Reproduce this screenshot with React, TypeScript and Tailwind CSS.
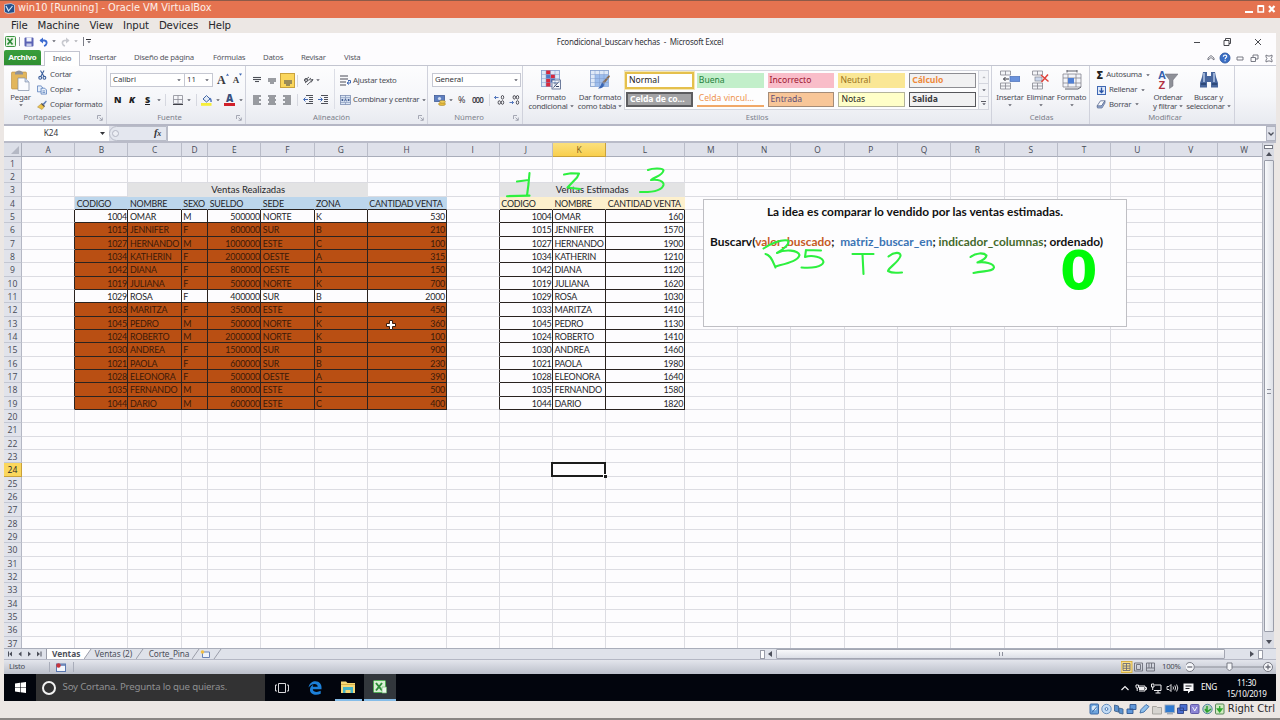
import type { ReactNode } from "react";
import { clsx } from "clsx";

const COLS = "ABCDEFGHIJKLMNOPQRSTUVW".split("");

const GRID =
  "grid grid-cols-[17.9px_53.3px_53.3px_53.3px_26.4px_53.2px_53.2px_53.3px_78.7px_53.3px_53.2px_53.2px_78.4px_53.33px_53.33px_53.33px_53.33px_53.33px_53.33px_53.33px_53.33px_53.33px_53.33px_53.33px]";

const SALES: string[][] = [
  ["1004", "OMAR", "M", "500000", "NORTE", "K", "530"],
  ["1015", "JENNIFER", "F", "800000", "SUR", "B", "210"],
  ["1027", "HERNANDO", "M", "1000000", "ESTE", "C", "100"],
  ["1034", "KATHERIN", "F", "2000000", "OESTE", "A", "315"],
  ["1042", "DIANA", "F", "800000", "OESTE", "A", "150"],
  ["1019", "JULIANA", "F", "500000", "NORTE", "K", "700"],
  ["1029", "ROSA", "F", "400000", "SUR", "B", "2000"],
  ["1033", "MARITZA", "F", "350000", "ESTE", "C", "450"],
  ["1045", "PEDRO", "M", "500000", "NORTE", "K", "360"],
  ["1024", "ROBERTO", "M", "2000000", "NORTE", "K", "100"],
  ["1030", "ANDREA", "F", "1500000", "SUR", "B", "900"],
  ["1021", "PAOLA", "F", "600000", "SUR", "B", "230"],
  ["1028", "ELEONORA", "F", "500000", "OESTE", "A", "390"],
  ["1035", "FERNANDO", "M", "800000", "ESTE", "C", "500"],
  ["1044", "DARIO", "M", "600000", "ESTE", "C", "400"],
];

const ESTIMATES = [
  "160", "1570", "1900", "1210", "1120", "1620", "1030", "1410",
  "1130", "1410", "1460", "1980", "1640", "1580", "1820",
];

const SALES_HEAD = ["CODIGO", "NOMBRE", "SEXO", "SUELDO", "SEDE", "ZONA", "CANTIDAD VENTA"];
const EST_HEAD = ["CODIGO", "NOMBRE", "CANTIDAD VENTA"];

const isData = (row: number, col: number) =>
  row >= 5 && row <= 19 && ((col >= 1 && col <= 7) || (col >= 9 && col <= 11));

function cellText(row: number, col: number) {
  if (row === 4) {
    if (col >= 1 && col <= 7) return SALES_HEAD[col - 1];
    if (col >= 9 && col <= 11) return EST_HEAD[col - 9];
  }
  if (!isData(row, col)) return "";
  const sale = SALES[row - 5];
  if (col <= 7) return sale[col - 1];
  if (col === 11) return ESTIMATES[row - 5];
  return sale[col - 9];
}

function Caret({ className }: { className?: string }) {
  return (
    <svg viewBox="0 0 5 3" className={clsx("h-[2.5px] w-[4px] shrink-0", className)}>
      <path d="M0.3 0.3h4.4L2.5 2.8z" fill="#5f616b" />
    </svg>
  );
}

function Cell({ row, col }: { row: number; col: number }) {
  const text = cellText(row, col);
  const data = isData(row, col);
  const numeric = data && [1, 4, 7, 9, 11].includes(col);
  const sold = data && col <= 7 && row !== 5 && row !== 11;
  const blackRight = data || isData(row, col + 1);
  const blackBottom = data || isData(row + 1, col);
  const head = row === 4 && text !== "";
  return (
    <div
      className={clsx(
        "overflow-hidden whitespace-nowrap border-r border-b pr-[0.5px] pl-[1.5px] leading-[13.5px]",
        numeric ? "text-right" : "text-left",
        blackRight ? "border-r-[#2a2320]" : head ? "border-r-transparent" : "border-r-[#dcdce2]",
        blackBottom ? "border-b-[#2a2320]" : "border-b-[#dcdce2]",
        sold && "bg-[#b94f13] text-[#3c1a08]",
        head && (col <= 7 ? "bg-[#bcd6ec]" : "bg-[#fdf0cd]"),
      )}
    >
      {text}
    </div>
  );
}

function MergedTitle({ text, className }: { text: string; className: string }) {
  return (
    <div className={clsx("bg-[#e3e3e4] text-center text-[9.5px] leading-[14.5px] tracking-normal", className)}>
      {text}
    </div>
  );
}

function Row({ row }: { row: number }) {
  const cells: ReactNode[] = [];
  for (let col = 0; col < COLS.length; col++) {
    if (row === 3 && col === 2) {
      cells.push(<MergedTitle key="sold" text="Ventas Realizadas" className="col-span-5" />);
      col = 6;
    } else if (row === 3 && col === 9) {
      cells.push(<MergedTitle key="est" text="Ventas Estimadas" className="col-span-3" />);
      col = 11;
    } else {
      cells.push(<Cell key={col} row={row} col={col} />);
    }
  }
  return (
    <div className={clsx(GRID, "h-[13.333px] grid-rows-[13.333px] text-[8.9px] tracking-[-0.22px] text-[#26262a]")}>
      <div
        className={clsx(
          "border-r border-b text-center font-['Open_Sans'] text-[8.6px] leading-[14px] tracking-normal",
          row === 24
            ? "border-[#c9a13a] bg-[#fbd75c]"
            : "border-r-[#b4b7c4] border-b-[#c4c7d2] bg-[#e1e3eb] text-[#474a55]",
        )}
      >
        {row}
      </div>
      {cells}
    </div>
  );
}

function Handwriting() {
  return (
    <svg
      viewBox="4 143 1270 505"
      className="pointer-events-none absolute top-0 left-0 h-[505px] w-[1270px]"
      fill="none"
      stroke="#2df03f"
      strokeWidth="2.1"
      strokeLinecap="round"
      strokeLinejoin="round"
    >
      <path d="M517 181.500L529 180M529.500 173L528.500 184L527 195.500M507 196.200L529.500 195.600" />
      <path d="M564 174.500L571 173.300L579 173.500L577 177.500L567.500 187.500L580 189" />
      <path d="M648 170C653 168 663 168 663.500 170.500C663 175 655 177 651 180C658 179 664 181 663.500 185C662 190 654 192.500 640 192" />
      <path d="M763.500 248.500C770 244 781 239 788 240.500C790 244 784 249 777 253C785 249 798 250 799.500 255C798 261 788 263 775.500 266.500M765.500 254C771 255 773 262 775.500 267.500" />
      <path d="M806 250L821 250.500M806 250L805 257C812 254.500 823 257 823.500 262C822 267 812 268.500 801.500 267.500" />
      <path d="M852.500 254H873.500M862.500 254.500L863.500 274" />
      <path d="M888.500 256.500C894 252 901 251.500 900.500 256C898 263 889 267 888 271C893 274 897 272.500 902 272.500" />
      <path d="M970.500 257C976 252.500 984 252.500 986.500 255.500C986 259 981 261 977.500 262.500C984 261.500 994 263 994 267.500C993 272 984 270.500 973.500 273" />
    </svg>
  );
}

function Sheet() {
  return (
    <div className="relative h-[505px] w-[1258px] overflow-hidden bg-[#fdfcfe] font-['Lato'] tracking-normal">
      <div className={clsx(GRID, "h-[13.8px] grid-rows-[13.8px] font-['Open_Sans'] text-[8.4px] text-[#484b56]")}>
        <div className="flex items-end justify-end border-r border-b border-[#a9adba] bg-[#dcdfe8] p-[2px]">
          <svg viewBox="0 0 8 8" className="h-[8px] w-[8px]">
            <path d="M8 0V8H0z" fill="#b4b8c4" />
          </svg>
        </div>
        {COLS.map((name) => (
          <div
            key={name}
            className={clsx(
              "border-r border-b text-center leading-[14px]",
              name === "K"
                ? "border-[#c9a13a] bg-linear-to-b from-[#fbe07c] to-[#f9cf4c] text-[#7a5a1a]"
                : "border-r-[#b9bcc8] border-b-[#a9adba] bg-[#dfe1ea]",
            )}
          >
            {name}
          </div>
        ))}
      </div>
      {Array.from({ length: 37 }, (_, i) => (
        <Row key={i} row={i + 1} />
      ))}

      {/* active cell K24 */}
      <div className="absolute top-[319px] left-[547px] h-[15px] w-[55px] border-2 border-[#1c1c1c]">
        <div className="absolute -right-[3px] -bottom-[3px] h-[4px] w-[4px] border-t border-l border-white bg-[#1c1c1c]" />
      </div>

      {/* text box floating over the cells */}
      <div className="absolute top-[56px] left-[699px] h-[128px] w-[424px] border border-[#bfbfc4] bg-[#fdfdfe] pt-[4px] text-[11.9px] font-bold text-[#111]">
        <p className="text-center leading-[15px]">
          La idea es comparar lo vendido por las ventas estimadas.
        </p>
        <p className="mt-[15px] pl-[6px] leading-[15px] whitespace-pre">
          Buscarv(<span className="text-[#c55a24]">valor_buscado</span>;{"  "}
          <span className="text-[#3b74b4]">matriz_buscar_en</span>;{" "}
          <span className="text-[#44692c]">indicador_columnas</span>; ordenado)
        </p>
      </div>

      <Handwriting />
      <span className="absolute top-[100px] left-[1056px] font-['DejaVu_Sans'] text-[54px] leading-[56px] font-bold text-[#00fa08]">
        0
      </span>

      {/* mouse pointer */}
      <svg viewBox="0 0 12 12" className="absolute top-[176px] left-[381px] h-[12px] w-[12px]">
        <path
          d="M4.500 1.500h3v3h3v3h-3v3h-3v-3h-3v-3h3z"
          fill="#fff"
          stroke="#3b1c0c"
          strokeWidth="1"
        />
      </svg>
    </div>
  );
}

function VScroll() {
  return (
    <div className="flex h-[505px] w-[12px] flex-col items-center border-l border-[#b4b7c2] bg-[#dadce4]">
      <div className="mt-[2px] h-[4px] w-[9px] border border-[#777a85] bg-white" />
      <svg viewBox="0 0 6 4" className="mt-[3px] h-[4px] w-[6px]">
        <path d="M3 0L6 4H0z" fill="#4c4f5a" />
      </svg>
      <div className="mt-[4px] flex h-[472px] w-[10px] items-center justify-center rounded-[1px] border border-[#9a9da9] bg-linear-to-r from-[#f8f9fb] to-[#dfe1e8]">
        <div className="mb-[10px] h-[5px] w-[4px] border-y border-[#8d909c]" />
      </div>
      <svg viewBox="0 0 6 4" className="mt-[8px] h-[4px] w-[6px]">
        <path d="M3 4L6 0H0z" fill="#4c4f5a" />
      </svg>
    </div>
  );
}

function Group({ label, className, launcher, children }: {
  label: string;
  className: string;
  launcher?: boolean;
  children: ReactNode;
}) {
  return (
    <div className={clsx("flex flex-col border-r border-[#d0d2dc]", className)}>
      <div className="flex h-[46px]">{children}</div>
      <div className="flex h-[12px] items-center text-[7.7px] tracking-[-0.05px] text-[#7c7f8b]">
        <span className={clsx("flex-1 text-center", launcher && "pr-[7px]")}>{label}</span>
        {launcher && (
          <svg viewBox="0 0 6 6" className="mr-[3px] h-[6px] w-[6px]" fill="none" stroke="#9396a3" strokeWidth="0.8">
            <path d="M0.500 4V0.500H4M2.500 2.500L5 5M5.300 2.500V5.300H2.500" />
          </svg>
        )}
      </div>
    </div>
  );
}

function BigButton({ icon, lines, className, caretInline }: {
  icon: ReactNode;
  lines: string[];
  className?: string;
  caretInline?: boolean;
}) {
  return (
    <div className={clsx("flex flex-col items-center pt-[4px] text-[7.8px] leading-[9px] whitespace-nowrap", className)}>
      <div className="h-[21px]">{icon}</div>
      <span className="mt-[2px]">{lines[0]}</span>
      {caretInline ? (
        <span className="flex items-center gap-[2px]">
          {lines[1]}
          <Caret />
        </span>
      ) : (
        <Caret className="mt-[2px]" />
      )}
    </div>
  );
}

function SmallButton({ icon, label, caret }: { icon: ReactNode; label: string; caret?: boolean }) {
  return (
    <div className="flex h-[14.7px] items-center gap-[3px] text-[7.8px] whitespace-nowrap">
      <span className="flex w-[10px] justify-center">{icon}</span>
      <span>{label}</span>
      {caret && <Caret className="ml-[1px]" />}
    </div>
  );
}

function PasteIcon() {
  return (
    <svg viewBox="0 0 19 21" className="h-[21px] w-[19px]">
      <rect x="0.500" y="2" width="15" height="17" rx="1" fill="#e2b65c" stroke="#b88a3a" strokeWidth="0.600" />
      <path d="M4 2.500Q8-1.500 12 2.500V4.500H4z" fill="#8f929b" />
      <path d="M7 8h7l4 4v8.500H7z" fill="#fbfcfe" stroke="#7d8ba5" strokeWidth="0.700" />
      <path d="M14 8v4h4" fill="#c9d6ea" stroke="#7d8ba5" strokeWidth="0.600" />
    </svg>
  );
}

function CutIcon() {
  return (
    <svg viewBox="0 0 9 10" className="h-[10px] w-[9px]" fill="none" stroke="#3c5f9c" strokeWidth="1.100">
      <path d="M2.500 0.500L5.800 6.300M6 0.500L3 6.300" />
      <circle cx="2.200" cy="7.800" r="1.400" />
      <circle cx="6.400" cy="7.800" r="1.400" />
    </svg>
  );
}

function CopyIcon() {
  return (
    <svg viewBox="0 0 11 10" className="h-[10px] w-[11px]" fill="#e9f1fb" stroke="#4a72b4" strokeWidth="0.800">
      <path d="M0.500 0.500h4l1.500 1.500v5H0.500z" />
      <path d="M4.500 3h4L10.500 5v4.500h-6z" />
      <path d="M6 6h3M6 7.700h3" />
    </svg>
  );
}

function BrushIcon() {
  return (
    <svg viewBox="0 0 10 10" className="h-[10px] w-[10px]">
      <path d="M5.500 4L9 0.500L9.800 1.500L7 5z" fill="#5a7cb8" />
      <path d="M4.500 3.500L7.500 6.500L5 9.500L0.500 7z" fill="#edc24a" stroke="#a0853c" strokeWidth="0.500" />
      <path d="M4.500 3.500L7.500 6.500" stroke="#4c4c58" strokeWidth="1.200" />
    </svg>
  );
}

function Lines({ rows, className }: { rows: [number, number, number][]; className?: string }) {
  return (
    <svg viewBox="0 0 10 10" className={clsx("h-[10px] w-[10px]", className)} stroke="#4e5058" strokeWidth="1.100">
      {rows.map(([x1, x2, y]) => (
        <path key={y} d={`M${x1} ${y}H${x2}`} />
      ))}
    </svg>
  );
}

function IndentIcon({ right }: { right?: boolean }) {
  return (
    <svg viewBox="0 0 11 10" className="h-[10px] w-[11px]" stroke="#4e5058" fill="none">
      <path d="M3 0.500h7M6 2.500h4M6 4.500h4M6 6.500h4M3 8.500h7" strokeWidth="1.100" />
      <path d={right ? "M0 4.500h4M2.500 2.500L4.500 4.500L2.500 6.500" : "M1 4.500h4M2.500 2.500L0.500 4.500L2.500 6.500"} stroke="#3f68b4" />
    </svg>
  );
}

function ClipboardGroup() {
  return (
    <Group label="Portapapeles" className="w-[103px]" launcher>
      <BigButton icon={<PasteIcon />} lines={["Pegar"]} className="w-[33px]" />
      <div className="flex flex-col pt-[2px]">
        <SmallButton icon={<CutIcon />} label="Cortar" />
        <SmallButton icon={<CopyIcon />} label="Copiar" caret />
        <SmallButton icon={<BrushIcon />} label="Copiar formato" />
      </div>
    </Group>
  );
}

function FontGroup() {
  return (
    <Group label="Fuente" className="w-[139px] pl-[3px]" launcher>
      <div className="flex flex-col pt-[7px] text-[#3a3a40]">
        <div className="flex h-[14px] items-center text-[7.8px] tracking-[-0.05px]">
          <div className="flex h-[14px] w-[75px] items-center justify-between border border-[#c6c8d2] bg-white pr-[3px] pl-[2px]">
            Calibri <Caret />
          </div>
          <div className="-ml-px flex h-[14px] w-[29px] items-center justify-between border border-[#c6c8d2] bg-white pr-[3px] pl-[2px]">
            11 <Caret />
          </div>
          <span className="ml-[4px] flex font-['Liberation_Serif'] text-[12px] leading-[14px] font-bold">
            A
            <svg viewBox="0 0 4 3" className="h-[3px] w-[3px]"><path d="M2 0L4 3H0z" fill="#3f68b4" /></svg>
          </span>
          <span className="ml-[4px] flex font-['Liberation_Serif'] text-[9px] leading-[14px] font-bold">
            A
            <svg viewBox="0 0 4 3" className="h-[3px] w-[3px]"><path d="M2 3L4 0H0z" fill="#3f68b4" /></svg>
          </span>
        </div>
        <div className="mt-[5px] flex h-[16px] items-center text-[9px] font-black text-[#1f1f24]">
          <span className="ml-[4px] w-[15px]">N</span>
          <span className="w-[16px] italic">K</span>
          <span className="w-[8px] underline">S</span>
          <Caret className="ml-[4px]" />
          <div className="ml-[4px] h-[12px] w-px bg-[#d6d8e0]" />
          <svg viewBox="0 0 10 10" className="ml-[7px] h-[10px] w-[10px]" fill="none" stroke="#8a8c96">
            <path d="M0.500 0.500h9v8h-9zM5 0.500v8M0.500 4.500h9" strokeWidth="0.800" />
            <path d="M0 9.500h10" stroke="#3f4048" />
          </svg>
          <Caret className="ml-[4px]" />
          <div className="ml-[5px] h-[12px] w-px bg-[#d6d8e0]" />
          <svg viewBox="0 0 11 12" className="ml-[4px] h-[12px] w-[11px]">
            <path d="M2 5L5.500 1.500L9 5L5.500 8z" fill="#e3ebf6" stroke="#4467a6" />
            <path d="M8.500 4Q10.500 5 10 8" stroke="#3f68b4" fill="none" strokeWidth="1.300" />
            <rect y="9" width="10.500" height="2.800" fill="#f6ee3a" />
          </svg>
          <Caret className="ml-[4px]" />
          <span className="ml-[4px] flex h-[12px] w-[11px] items-center justify-center border-b-[3px] border-[#d1202a] text-[10px] leading-[9px] text-[#38507e]">
            A
          </span>
          <Caret className="ml-[4px]" />
        </div>
      </div>
    </Group>
  );
}

function AlignGroup() {
  return (
    <Group label="Alineación" className="w-[182px] pl-[6px]" launcher>
      <div className="flex w-[82px] flex-col pt-[7px]">
        <div className="flex h-[15px] items-center">
          <Lines rows={[[1, 9, 1.5], [1, 9, 3.5], [3, 7, 5.5]]} />
          <Lines className="ml-[5px]" rows={[[1, 9, 3], [1, 9, 5], [3, 7, 7]]} />
          <div className="ml-[3px] flex h-[15px] w-[15px] items-center justify-center border border-[#c9a23c] bg-[#fad65c]">
            <Lines rows={[[1, 9, 5], [1, 9, 7], [3, 7, 9]]} />
          </div>
          <div className="ml-[2px] h-[12px] w-px bg-[#d6d8e0]" />
          <svg viewBox="0 0 11 10" className="ml-[5px] h-[10px] w-[11px]" fill="none" stroke="#4e5058">
            <path d="M1 5L6 1M2 7L8 2M4 9L10 3.500M8 6.500L10 3.500L6.500 4" strokeWidth="0.900" />
            <circle cx="3" cy="4" r="1.500" />
          </svg>
          <Caret className="ml-[2px]" />
        </div>
        <div className="mt-[4px] flex h-[16px] items-center">
          <Lines rows={[[1, 9, 1], [1, 7, 3], [1, 9, 5], [1, 7, 7], [1, 9, 9]]} />
          <Lines className="ml-[5px]" rows={[[1, 9, 1], [2, 8, 3], [1, 9, 5], [2, 8, 7], [1, 9, 9]]} />
          <Lines className="ml-[5px]" rows={[[1, 9, 1], [3, 9, 3], [1, 9, 5], [3, 9, 7], [1, 9, 9]]} />
          <div className="ml-[5px] h-[12px] w-px bg-[#d6d8e0]" />
          <span className="ml-[5px]"><IndentIcon /></span>
          <span className="ml-[4px]"><IndentIcon right /></span>
        </div>
      </div>
      <div className="my-[3px] w-px bg-[#dcdee6]" />
      <div className="ml-[5px] flex flex-col pt-[7px]">
        <div className="flex h-[15px] items-center gap-[2px] text-[7.8px] whitespace-nowrap">
          <svg viewBox="0 0 11 11" className="h-[11px] w-[11px]" fill="none">
            <path d="M0 1h8M0 4h8M0 7h6M0 10h6" stroke="#85878f" strokeWidth="1.400" />
            <path d="M8 5.500h2.500V8H7.500M9 6.500L7 8L9 9.500" stroke="#3f68b4" />
          </svg>
          Ajustar texto
        </div>
        <div className="mt-[4px] flex h-[16px] items-center gap-[2px] text-[7.8px] whitespace-nowrap">
          <svg viewBox="0 0 11 10" className="h-[10px] w-[11px]">
            <rect x="0.500" y="0.500" width="10" height="9" fill="#dbe6f5" stroke="#6f83ab" strokeWidth="0.700" />
            <path d="M0.500 2.700h10M0.500 7.400h10M5.500 0.500v2M5.500 7.500v2" stroke="#6f83ab" strokeWidth="0.600" />
            <path d="M1 5h2.500M10 5H7.500M2.500 4v2M8.500 4v2M4.500 6.300L5.500 3.700L6.500 6.300" stroke="#2f4b86" strokeWidth="0.800" fill="none" />
          </svg>
          Combinar y centrar
          <Caret className="ml-[1px]" />
        </div>
      </div>
    </Group>
  );
}

function NumberGroup() {
  return (
    <Group label="Número" className="w-[95px] pl-[4px]" launcher>
      <div className="flex flex-col pt-[7px]">
        <div className="flex h-[14px] w-[89px] items-center justify-between border border-[#c6c8d2] bg-white pr-[2px] pl-[2px] text-[7.8px] tracking-[-0.1px] text-[#33343a]">
          General <Caret />
        </div>
        <div className="mt-[5px] flex h-[16px] items-center text-[9px] text-[#3f4048]">
          <svg viewBox="0 0 12 11" className="ml-[2px] h-[11px] w-[12px]">
            <rect x="0.500" y="0.500" width="10" height="6" fill="#5e7fc0" stroke="#35528e" strokeWidth="0.700" />
            <circle cx="5.500" cy="3.500" r="1.600" fill="#d3dff2" />
            <ellipse cx="8" cy="9" rx="3.500" ry="1.600" fill="#e7bb3c" stroke="#9a7a24" strokeWidth="0.500" />
            <ellipse cx="8.500" cy="6.800" rx="3" ry="1.400" fill="#f2ce58" stroke="#9a7a24" strokeWidth="0.500" />
          </svg>
          <Caret className="ml-[3px]" />
          <span className="ml-[5px] w-[8px]">%</span>
          <span className="ml-[6px] w-[11px] text-[8px] font-semibold tracking-[-1px]">000</span>
          <div className="ml-[6px] h-[12px] w-px bg-[#d6d8e0]" />
          {["up", "down"].map((dir) => (
            <svg key={dir} viewBox="0 0 11 10" className="ml-[4px] h-[10px] w-[11px]" fill="none" stroke="#3f4048" strokeWidth="0.900">
              <path d={dir === "up" ? "M0.500 2.500h4M2 1L0.500 2.500L2 4" : "M0.500 7.500h4M3 6L4.500 7.500L3 9"} stroke="#3f68b4" />
              <ellipse cx="8.500" cy="2.300" rx="1.200" ry="1.800" />
              <ellipse cx="8.500" cy="7.500" rx="1.200" ry="1.800" />
              <ellipse cx="5.300" cy={dir === "up" ? 7.5 : 2.3} rx="1.200" ry="1.800" />
            </svg>
          ))}
        </div>
      </div>
    </Group>
  );
}

function GridArt({ children }: { children: ReactNode }) {
  return (
    <svg viewBox="0 0 20 20" className="h-[20px] w-[20px]">
      <rect x="0.500" y="0.500" width="18" height="16" fill="#dfe9f7" stroke="#7e9bcb" strokeWidth="0.800" />
      {children}
      <path d="M5 0.500v16M9.500 0.500v16M14 0.500v16M0.500 4.500h18M0.500 8.500h18M0.500 12.500h18" stroke="#7e9bcb" strokeWidth="0.700" strokeOpacity="0.700" />
    </svg>
  );
}

const STYLES: { name: string; className: string }[] = [
  { name: "Normal", className: "border-2 border-[#e5c04c] bg-white text-[#222] outline outline-[#f5e7b4] -m-px" },
  { name: "Buena", className: "bg-[#c2efca] text-[#24803a]" },
  { name: "Incorrecto", className: "bg-[#f9bdc9] text-[#9c1430]" },
  { name: "Neutral", className: "bg-[#fae795] text-[#9a7420]" },
  { name: "Cálculo", className: "border border-[#8d8d92] bg-[#f1f1f2] font-bold text-[#ee8a3c]" },
  { name: "Celda de co...", className: "border-2 border-[#5d5d60] bg-[#a3a3a5] font-bold text-white tracking-[-0.1px]" },
  { name: "Celda vincul...", className: "border-b-2 border-[#f0a868] text-[#ee944e]" },
  { name: "Entrada", className: "border border-[#a58c78] bg-[#f8c698] text-[#5e5078]" },
  { name: "Notas", className: "border border-[#b3b39a] bg-[#ffffc8] text-[#222]" },
  { name: "Salida", className: "border border-[#56565a] bg-[#f1f1f2] font-bold text-[#3a3a40]" },
];

function StylesGroup() {
  return (
    <Group label="Estilos" className="w-[469px]">
      <BigButton
        className="w-[56px]"
        caretInline
        lines={["Formato", "condicional"]}
        icon={
          <GridArt>
            <path d="M5 0.500h4.500v4H5zM9.500 4.500H14v4H9.500zM5 8.500h4.500v8H5z" fill="#d8283c" />
            <path d="M5 4.500h4.500v4H5zM9.500 8.500H14v4H9.500z" fill="#4f79c8" />
            <rect x="11" y="10" width="8.500" height="9" fill="#f4f6fa" stroke="#4b5e86" strokeWidth="0.800" />
            <path d="M12.500 17.500L18 11.500M12.500 13h3M15 16.500h3" stroke="#33405f" />
          </GridArt>
        }
      />
      <BigButton
        className="w-[42px]"
        caretInline
        lines={["Dar formato", "como tabla"]}
        icon={
          <GridArt>
            <path d="M5 4.500h13.500v12H5z" fill="#9dbdec" />
            <path d="M19 5L20 6.500L14 14L12 12.500z" fill="#8a6c50" />
            <path d="M12 12.500L14.500 14.500Q13 19 8 18.500Q11 16 12 12.500z" fill="#3a66b4" />
          </GridArt>
        }
      />
      <div className="mt-[4px] ml-[3px] flex h-[40px] border border-[#d4d6de] bg-[#fdfdfe]">
        <div className="grid w-[353px] grid-cols-5 grid-rows-2 gap-x-[4px] gap-y-[4px] pt-[2px] pr-[2px] pb-[2px] pl-px text-[8.6px] tracking-normal">
          {STYLES.map((style) => (
            <div
              key={style.name}
              className={clsx("flex items-center overflow-hidden px-[2px] leading-[11px] whitespace-nowrap", style.className)}
            >
              {style.name}
            </div>
          ))}
        </div>
        <div className="flex w-[10px] flex-col border-l border-[#d4d6de] bg-[#f3f4f7]">
          <div className="flex flex-1 items-center justify-center opacity-40"><Caret className="rotate-180" /></div>
          <div className="flex flex-1 items-center justify-center border-y border-[#d4d6de]"><Caret /></div>
          <div className="flex flex-1 flex-col items-center justify-center gap-px">
            <div className="h-px w-[5px] bg-[#5a5a62]" />
            <Caret />
          </div>
        </div>
      </div>
    </Group>
  );
}

function CellsGroup() {
  const rows = (
    <path d="M0.500 1h10v4h-10zM5.500 1v4M0.500 13h10v6h-10zM5.500 13v6M0.500 16h10" fill="#f4f5f8" stroke="#85878f" strokeWidth="0.800" />
  );
  return (
    <Group label="Celdas" className="w-[98px] pl-[2px]">
      <BigButton
        className="w-[32px]"
        lines={["Insertar"]}
        icon={
          <svg viewBox="0 0 20 20" className="h-[20px] w-[20px]">
            {rows}
            <rect x="10" y="6.500" width="10" height="5" fill="#6a92dc" stroke="#4a6fb8" strokeWidth="0.700" />
            <path d="M9 9H3.500M5.500 7L3.500 9L5.500 11" stroke="#33343c" fill="none" />
          </svg>
        }
      />
      <BigButton
        className="w-[29px]"
        lines={["Eliminar"]}
        icon={
          <svg viewBox="0 0 18 20" className="h-[20px] w-[18px]">
            {rows}
            <rect x="3" y="7" width="7" height="4" fill="#cdd9ee" stroke="#85878f" strokeWidth="0.700" />
            <path d="M9 5L16.500 11.500M16 4.500L9.500 12" stroke="#e0433c" strokeWidth="1.500" />
          </svg>
        }
      />
      <BigButton
        className="w-[33px]"
        lines={["Formato"]}
        icon={
          <svg viewBox="0 0 20 20" className="h-[20px] w-[20px]" fill="none">
            <path d="M1 4h18v13H1zM1 8h18M1 13h18M6 4v13M14 4v13" fill="#f2f4f9" stroke="#85878f" strokeWidth="0.800" />
            <path d="M5 1h10M5 0v2.500M15 0v2.500M3 19h13l3-2" stroke="#5b5d68" />
            <rect x="6" y="8" width="6" height="5.500" fill="#4f7fd4" />
          </svg>
        }
      />
    </Group>
  );
}

function EditGroup() {
  return (
    <Group label="Modificar" className="w-[145px] pl-[6px]">
      <div className="flex w-[54px] flex-col pt-[2px]">
        <SmallButton icon={<span className="text-[10px] leading-[10px] font-black text-[#222]">Σ</span>} label="Autosuma" caret />
        <SmallButton
          icon={
            <svg viewBox="0 0 9 9" className="h-[9px] w-[9px]">
              <rect x="0.500" y="0.500" width="8" height="8" fill="#dfe9f8" stroke="#3f68b4" />
              <path d="M4.500 1.500v4M2.500 4.500L4.500 6.500L6.500 4.500" stroke="#2a55a8" strokeWidth="1.300" fill="none" />
            </svg>
          }
          label="Rellenar"
          caret
        />
        <SmallButton
          icon={
            <svg viewBox="0 0 10 9" className="h-[9px] w-[10px]">
              <path d="M4.500 0.800H9L5.500 6H1z" fill="#fafbfd" stroke="#5a6a90" strokeWidth="0.800" />
              <path d="M1 6h4.500L9 0.800V3L6 8H1.500z" fill="#9ab0d8" stroke="#5a6a90" strokeWidth="0.700" />
            </svg>
          }
          label="Borrar"
          caret
        />
      </div>
      <BigButton
        className="ml-[-2px] w-[40px]"
        caretInline
        lines={["Ordenar", "y filtrar"]}
        icon={
          <svg viewBox="0 0 20 20" className="h-[20px] w-[20px]">
            <path d="M7 4h13l-5 6v6l-3.500 2.500V10z" fill="#8e9098" stroke="#6c6e78" strokeWidth="0.500" />
            <text x="0" y="9" className="font-['Liberation_Sans'] text-[11px] font-bold" fill="#3560ac">A</text>
            <text x="0.500" y="19" className="font-['Liberation_Sans'] text-[11px] font-bold" fill="#b03040">Z</text>
          </svg>
        }
      />
      <BigButton
        className="w-[41px]"
        caretInline
        lines={["Buscar y", "seleccionar"]}
        icon={
          <svg viewBox="0 0 20 20" className="h-[20px] w-[20px]" fill="#47659c">
            <path d="M4 2h4v4h4V2h4l1 5l2 6v4.500h-7V12H8v5.500H1V13l2-6z" />
            <path d="M5 3v9M15 3v9" stroke="#b4c6e6" strokeWidth="1.500" />
            <path d="M2 14h5M13 14h5" stroke="#26406e" strokeWidth="1.500" />
          </svg>
        }
      />
    </Group>
  );
}

function TitleArea() {
  return (
    <div className="flex h-[17px] items-center bg-[#fdfcfe]">
      <div className="flex w-[240px] items-center">
        <svg viewBox="0 0 11 11" className="ml-[1px] h-[11px] w-[11px]">
          <rect x="0.500" y="0.500" width="10" height="10" rx="1" fill="#e7f3e4" stroke="#3f9646" />
          <path d="M2.500 2.500L7.500 8.500M7.500 2.500L2.500 8.500" stroke="#2c8a38" strokeWidth="1.700" />
        </svg>
        <div className="ml-[3px] h-[9px] w-px bg-[#9a9ca6]" />
        <svg viewBox="0 0 10 10" className="ml-[4px] h-[10px] w-[10px]">
          <rect x="0.500" y="0.500" width="9" height="9" rx="1" fill="#5b62b4" />
          <rect x="2.500" y="0.500" width="5" height="4" fill="#f2f4fb" />
          <rect x="2.500" y="6.500" width="5" height="3" fill="#c9cdea" />
        </svg>
        <svg viewBox="0 0 9 10" className="ml-[5px] h-[10px] w-[9px]" fill="none">
          <path d="M1.500 3.500H5.500Q8 4 7.500 6.500Q7 8.500 5 9" stroke="#3b6ad0" strokeWidth="1.800" />
          <path d="M4 0.500L0.500 3.500L4 6.500z" fill="#3b6ad0" />
        </svg>
        <Caret className="ml-[4px]" />
        <svg viewBox="0 0 9 10" className="ml-[5px] h-[10px] w-[9px]" fill="none" opacity="0.600">
          <path d="M7.500 3.500H3.500Q1 4 1.500 6.500Q2 8.500 4 9" stroke="#a4a7b0" strokeWidth="1.600" />
          <path d="M5 0.500L8.500 3.500L5 6.500z" fill="#a4a7b0" />
        </svg>
        <Caret className="ml-[4px] opacity-50" />
        <div className="ml-[5px] h-[9px] w-px bg-[#7a7c86]" />
        <div className="ml-[2px] flex flex-col items-center gap-[1px]">
          <div className="h-px w-[5px] bg-[#33343a]" />
          <Caret />
        </div>
      </div>
      <span className="flex-1 text-center text-[8px] tracking-[-0.2px] whitespace-pre text-[#33343a]">
        Fcondicional_buscarv hechas  -  Microsoft Excel
      </span>
      <svg viewBox="0 0 70 10" className="mr-[13px] ml-[157px] h-[10px] w-[70px]" fill="none" stroke="#33343a" strokeWidth="0.900">
        <path d="M1 5.500h6M31 3.500h5v5h-5zM32.500 3V1.500h5v5H36M62 2L68 8M68 2L62 8" />
      </svg>
    </div>
  );
}

const TABS = [
  { name: "Insertar", className: "ml-[9px] w-[45px]" },
  { name: "Diseño de página", className: "w-[79px]" },
  { name: "Fórmulas", className: "w-[50px]" },
  { name: "Datos", className: "w-[38px]" },
  { name: "Revisar", className: "w-[43px]" },
  { name: "Vista", className: "w-[30px]" },
];

function RibbonTabs() {
  return (
    <div className="flex h-[16px] items-center border-b border-[#c3c5d0] bg-[#fdfcfe] text-[7.800px] whitespace-nowrap text-[#55575f]">
      <div className="flex h-[15px] w-[37px] items-center justify-center rounded-t-[2px] bg-linear-to-b from-[#3a9e3c] to-[#2f8f31] font-bold text-white">
        Archivo
      </div>
      <div className="mb-[-2px] ml-[3px] flex h-[16px] w-[36px] items-center justify-center border border-b-0 border-[#c3c5d0] bg-white">
        Inicio
      </div>
      {TABS.map((tab) => (
        <span key={tab.name} className={tab.className}>{tab.name}</span>
      ))}
      <svg viewBox="0 0 70 12" className="mr-[1px] ml-auto h-[12px] w-[70px]" fill="none" stroke="#6b6d78" strokeWidth="0.900">
        <path d="M3 6L6 3.500L9 6V8L6 5.500L3 8z" />
        <circle cx="20" cy="6" r="5" fill="#3a6fc6" stroke="#2d57a0" />
        <path d="M18.300 4.800Q18.500 3 20.200 3Q22 3.200 21.600 4.900Q20.200 5.800 20.100 7.200M20.100 8.200v1" stroke="#fff" strokeWidth="1.200" />
        <path d="M32 5h6v3h-6zM46 5.500h4.500v4H46zM48 5V3h5v4h-2M61 3l2 1h2l2-1v2l-1 1.500l1 1.500v2l-2-1h-2l-2 1V8l1-1.500L61 5z" />
      </svg>
    </div>
  );
}

function FormulaBar() {
  return (
    <div className="flex h-[19px] flex-col border-t-2 border-[#b5b7c5] bg-[#dfe1ea]">
      <div className="flex h-[15px] items-stretch">
        <div className="flex w-[105px] items-center bg-white pr-[4px] text-[8.2px] tracking-normal text-[#33343a]">
          <span className="flex-1 pr-[2px] text-center">K24</span>
          <svg viewBox="0 0 5 3" className="h-[3px] w-[5px]"><path d="M0 0h5L2.500 3z" fill="#33343a" /></svg>
        </div>
        <div className="flex w-[58px] items-center justify-between rounded-l-full border border-[#b9bcc8] bg-[#e4e7ef] pr-[5px] pl-[2px]">
          <span className="h-[7px] w-[7px] rounded-full border border-[#b4b7c4] bg-[#eceef4]" />
          <span className="font-['Liberation_Serif'] text-[10.500px] leading-[12px] font-bold text-[#33343a] italic">
            f<span className="text-[8px]">x</span>
          </span>
        </div>
        <div className="flex-1 border-l border-[#b9bcc8] bg-[#fdfdfe]" />
        <div className="flex w-[10px] items-center justify-center border border-[#b0b3c0] bg-[#dfe1ea]">
          <svg viewBox="0 0 6 4" className="h-[4px] w-[6px]" fill="none" stroke="#4c4f5a" strokeWidth="1.300">
            <path d="M0.500 0.500L3 3L5.500 0.500" />
          </svg>
        </div>
      </div>
      <div className="h-[2px] bg-[#b9bbc8]" />
    </div>
  );
}

function SheetTabs() {
  return (
    <div className="flex h-[11px] items-stretch border-t border-[#a9adba] bg-[#dfe2ea] text-[8.3px] leading-[10px] tracking-[-0.08px] text-[#4c4f5a]">
      <svg viewBox="0 0 42 10" className="h-[10px] w-[42px] shrink-0" fill="#4c4f5a">
        <path d="M4 2.500h1v5H4zM8 2.500v5L5.200 5zM17.500 2.500v5L14.500 5zM24 2.500v5L27 5zM33 2.500v5L36 5zM36.500 2.500h1v5h-1z" />
      </svg>
      <span className="w-[38px] border-l border-[#9a9da9] bg-white pl-[5px] font-bold tracking-normal">Ventas</span>
      <svg viewBox="0 0 8 10" className="h-[10px] w-[8px]" stroke="#9a9da9"><path d="M0 0H7L0 10z" fill="#fff" stroke="none" /><path d="M7 0L0 10" /></svg>
      <span className="w-[44px] pr-px text-center">Ventas (2)</span>
      <svg viewBox="0 0 8 10" className="h-[10px] w-[8px]" stroke="#9a9da9"><path d="M7 0L0 10" /></svg>
      <span className="w-[48px] pl-[2px] text-center tracking-[-0.15px]">Corte_Pina</span>
      <svg viewBox="0 0 30 10" className="h-[10px] w-[30px]" fill="none" stroke="#9a9da9">
        <path d="M7 0L0 10M29 0L22 10" />
        <path d="M10.500 3h7v5.500h-7z" fill="#eef3fb" stroke="#6b83b4" />
        <circle cx="10.500" cy="3" r="1.800" fill="#f2c046" stroke="none" />
      </svg>
      <div className="ml-auto flex w-[517px] items-center">
        <div className="ml-px h-[9px] w-[5px] border border-[#9a9da9] bg-white" />
        <svg viewBox="0 0 4 6" className="ml-[3px] h-[6px] w-[4px]"><path d="M4 0v6L0 3z" fill="#4c4f5a" /></svg>
        <div className="ml-[4px] flex h-[10px] w-[449px] items-center justify-center rounded-[1px] border border-[#a3a6b2] bg-linear-to-b from-[#f8f9fb] to-[#dcdfe7]">
          <div className="h-[4px] w-[4px] border-x border-[#8d909c]" />
        </div>
        <svg viewBox="0 0 4 6" className="ml-[25px] h-[6px] w-[4px]"><path d="M0 0v6L4 3z" fill="#4c4f5a" /></svg>
        <div className="ml-[4px] h-[9px] w-[5px] border border-[#9a9da9] bg-white" />
      </div>
    </div>
  );
}

function StatusBar() {
  return (
    <div className="flex h-[15px] items-center border-t border-[#b4b7c4] bg-linear-to-b from-[#e3e5ec] to-[#bcc0cb] text-[7.7px] text-[#474a55]">
      <span className="w-[45px] pl-[5px]">Listo</span>
      <div className="h-[10px] w-px bg-[#a9adba]" />
      <svg viewBox="0 0 10 9" className="ml-[6px] h-[9px] w-[10px]">
        <rect x="0.500" y="1" width="9" height="7.500" fill="#f4f7fc" stroke="#5b78b0" />
        <path d="M1 2h8" stroke="#5b78b0" strokeWidth="1.500" />
        <circle cx="2.500" cy="2.500" r="2.200" fill="#c8343c" />
      </svg>
      <div className="ml-[7px] h-[10px] w-px bg-[#a9adba]" />
      <svg viewBox="0 0 38 12" className="ml-auto h-[12px] w-[38px]" fill="none" stroke="#6b6d78" strokeWidth="0.900">
        <rect x="0" y="0.500" width="11" height="11" fill="#fae08c" stroke="#d4ac38" />
        <path d="M2 2.500h7v7H2zM2 5h7M2 7.300h7M5.500 2.500v7" />
        <path d="M13.500 2h8v8h-8zM15.500 3.500h4v5h-4zM25.500 2h8v8h-8zM28 2v5M30.500 2v5M25.500 7h8" />
      </svg>
      <span className="ml-[3px] w-[24px] text-[7.700px]">100%</span>
      <svg viewBox="0 0 90 12" className="h-[12px] w-[90px]" fill="#f6f7fa" stroke="#6b6d78" strokeWidth="0.900">
        <path d="M9 6h70" stroke="#85878f" />
        <circle cx="3.800" cy="6" r="4.500" />
        <path d="M1.300 6h5" strokeWidth="1.300" />
        <path d="M41 2h5v5.500L43.500 10L41 7.500z" />
        <circle cx="82" cy="6" r="4.500" />
        <path d="M79.500 6h5M82 3.500v5" strokeWidth="1.300" />
      </svg>
    </div>
  );
}

function Taskbar() {
  return (
    <div className="flex h-[27px] items-stretch bg-[#02050d] text-white">
      <div className="flex w-[32px] items-center justify-center">
        <svg viewBox="0 0 11 11" className="h-[11px] w-[11px]" fill="#fff">
          <path d="M0 1.500L5 0.800V5.200H0zM5.600 0.700L11 0V5.200H5.600zM0 5.800H5V10.200L0 9.500zM5.600 5.800H11V11L5.600 10.300z" />
        </svg>
      </div>
      <div className="flex w-[229px] items-center bg-[#323233]">
        <div className="ml-[6px] h-[14px] w-[14px] rounded-full border-2 border-[#f2f2f2]" />
        <span className="ml-[6.500px] text-[9.700px] tracking-[-0.19px] text-[#8f9092]">Soy Cortana. Pregunta lo que quieras.</span>
      </div>
      <div className="flex w-[33px] items-center justify-center">
        <svg viewBox="0 0 14 10" className="h-[10px] w-[14px]" fill="none" stroke="#d8d8da">
          <path d="M3.500 0.500h7v9h-7zM2 2H0.500v6H2M12 2h1.500v6H12" />
        </svg>
      </div>
      <div className="flex w-[34px] items-center justify-center">
        <svg viewBox="0 0 14 14" className="h-[14px] w-[14px]">
          <path d="M0.500 6.500C1.500 2 4.500 0.300 7.500 0.300C11.500 0.300 13.500 3.500 13.500 6.500V8.200H4.800C5 10.800 9 12 12.700 9.800V12.700C8 15.200 1.500 13.500 2 8.300C2.200 6.200 3.500 4.500 5.500 3.800C4.900 4.500 4.800 5.200 4.800 5.800H9.700C9.700 2 4 2 0.500 6.500z" fill="#1c80d8" />
        </svg>
      </div>
      <div className="flex w-[32px] flex-col items-center justify-end">
        <svg viewBox="0 0 14 12" className="mb-[6px] h-[12px] w-[14px]">
          <path d="M0 0.500h5l1.500 1.500H14V12H0z" fill="#f4d877" />
          <path d="M0 3.500h14" stroke="#d5b048" />
          <path d="M2 6h10v6H9.500V9h-5v3H2z" fill="#44b4c8" />
        </svg>
        <div className="h-[2px] w-[27px] bg-[#86bde8]" />
      </div>
      <div className="flex w-[32px] flex-col items-center justify-end bg-[#32373c]">
        <svg viewBox="0 0 14 14" className="mb-[5px] h-[14px] w-[14px]">
          <rect x="0.500" y="0.500" width="12" height="12" rx="1" fill="#d9efd4" stroke="#4faf54" />
          <path d="M3 3L9 10.500M9 3L3 10.500" stroke="#2e8e3a" strokeWidth="2" />
          <path d="M9 7h4.500v6H9z" fill="#eef8ec" stroke="#6fba70" strokeWidth="0.700" />
        </svg>
        <div className="h-[2px] w-[32px] bg-[#86bde8]" />
      </div>
      <svg viewBox="0 0 76 14" className="my-auto ml-auto h-[14px] w-[76px]" fill="none" stroke="#f0f0f2">
        <path d="M1.500 9L5 5.500L8.500 9" strokeWidth="1.200" />
        <path d="M18 5h7v5h-6M25 6.500h1.500v2H25M16 4h2.500v2.500q-1.500 1.500-2.500 0zM17.200 7v3" />
        <path d="M19 6h5v3h-5z" fill="#f0f0f2" stroke="none" />
        <path d="M35 4h6v5.500h-7M38 9.500V12M35.500 12h5M31.500 3h2.500v3h-2.500zM32.700 6v3" />
        <path d="M47 5.500h2L51 3.500v7L49 8.500h-2zM53 5.500q1 1.500 0 3M54.800 4.500q1.700 2.500 0 5M56.600 3.500q2.400 3.500 0 7" strokeWidth="0.900" />
        <path d="M63.500 2.500h10v7.500H70.500L68 12.500V10H63.500z" fill="#f6f6f8" stroke="none" />
        <path d="M65.500 5h6M65.500 7.500h4" stroke="#15171d" />
      </svg>
      <span className="my-auto ml-[5px] w-[24px] text-[8.200px]">ENG</span>
      <div className="mr-[8px] flex w-[43px] flex-col justify-center text-center text-[8px] leading-[11px] whitespace-nowrap">
        <span>11:30</span>
        <span>15/10/2019</span>
      </div>
    </div>
  );
}

function VmIndicators() {
  return (
    <svg viewBox="0 0 136 12" className="h-[12px] w-[136px]" strokeWidth="0.900">
      <rect x="1" y="1" width="8.500" height="10" rx="1" fill="#6ea4dc" stroke="#2f5f9e" />
      <circle cx="5.200" cy="5" r="2.500" fill="#d9e9f8" />
      <path d="M3 9.500L7.500 4" stroke="#2f5f9e" />
      <circle cx="17.500" cy="6" r="4.700" fill="#c4dcf4" stroke="#5b86b8" />
      <circle cx="17.500" cy="6" r="1.400" fill="#fff" stroke="#3468a8" />
      <path d="M25.500 2l4 1v6l-4-1zM30 5l4 1v5l-4-1z" fill="#5b92d0" stroke="#42648e" />
      <path d="M41 1.500h6v5h-6zM38 6h6v4.500h-6z" fill="#5f97da" stroke="#2f5590" />
      <path d="M51 10l1-3.500L57 1.500l3 2L55 9z" fill="#8fc0ec" stroke="#3a6aa6" />
      <path d="M63.500 3.500h4l1 1h4v6.500h-9z" fill="#d6d4d0" stroke="#a09e9a" />
      <rect x="76" y="2" width="9.500" height="7.500" fill="#2f7ad0" stroke="#9aa8bc" />
      <path d="M78 10.800h6" stroke="#7a8698" />
      <path d="M91 1.500h7v6h-7zM88.500 5h6v5.500h-6z" fill="#4a6ed0" stroke="#2c4284" />
      <rect x="101.500" y="1.500" width="8.500" height="9" rx="1" fill="#8c84d4" stroke="#564ea0" />
      <path d="M103.500 4l2.200 4l2.200-4" fill="none" stroke="#fff" />
      <circle cx="118.500" cy="6" r="4.700" fill="#b4d4b8" stroke="#4a7c9e" />
      <path d="M118 3v5M116 6l2 3l4-3" fill="none" stroke="#2aa030" strokeWidth="1.500" />
      <rect x="126.500" y="1" width="8.500" height="10" rx="1" fill="#d0ecc0" stroke="#4a7c4e" />
      <path d="M130.700 3v3.500M128.500 6l2.200 3L133 6z" fill="#2fa82e" stroke="#2fa82e" strokeWidth="1.300" />
    </svg>
  );
}

export default function App() {
  return (
    <div className="flex h-[720px] w-[1280px] flex-col overflow-hidden border-b-2 border-[#8a8684] bg-[#ece7e4] font-['Noto_Sans'] text-[#4a4c55]">
      <header className="flex h-[18px] items-center border-t border-[#8d5a48] bg-[#e57350] pb-[2px] font-['DejaVu_Sans'] text-[9.800px] text-[#fdf0ea]">
        <svg viewBox="0 0 11 11" className="ml-[4px] h-[11px] w-[11px]">
          <path d="M0.500 1.500L7 0.500L10.500 2V9.500L4 10.500L0.500 9z" fill="#24508c" stroke="#cfe0f2" strokeWidth="0.700" />
          <path d="M2 3L4.500 8L8.500 3" fill="none" stroke="#d7e8f8" strokeWidth="1.200" />
        </svg>
        <span className="ml-[3px]">win10 [Running] - Oracle VM VirtualBox</span>
        <svg viewBox="0 0 32 10" className="mr-[4px] ml-auto h-[10px] w-[32px]" fill="none" stroke="#fff">
          <path d="M1 8h8" strokeWidth="2" />
          <path d="M14 2h5.500v6H14z" strokeWidth="1.400" />
          <path d="M14 2h5.500" strokeWidth="2" />
          <path d="M25 2L30.500 8M30.500 2L25 8" strokeWidth="2.200" />
        </svg>
      </header>
      <nav className="flex h-[15px] items-center gap-[10px] pl-[11px] font-['DejaVu_Sans'] text-[10.200px] tracking-[-0.12px] text-[#26262a]">
        {["File", "Machine", "View", "Input", "Devices", "Help"].map((item) => (
          <span key={item}>{item}</span>
        ))}
      </nav>
      <main className="ml-[4px] flex w-[1272px] flex-col tracking-[-0.24px]">
        <TitleArea />
        <RibbonTabs />
        <div className="flex h-[58px] bg-linear-to-b from-[#fdfdfe] via-[#f6f7fa] to-[#e8eaf0]">
          <ClipboardGroup />
          <FontGroup />
          <AlignGroup />
          <NumberGroup />
          <StylesGroup />
          <CellsGroup />
          <EditGroup />
        </div>
        <FormulaBar />
        <div className="flex">
          <Sheet />
          <VScroll />
        </div>
        <SheetTabs />
        <StatusBar />
        <Taskbar />
      </main>
      <footer className="flex h-[17px] items-center justify-end pr-[5px] pb-[2px] font-['DejaVu_Sans'] text-[10px] text-[#26262a]">
        <VmIndicators />
        <span className="ml-[3px]">Right Ctrl</span>
      </footer>
    </div>
  );
}
